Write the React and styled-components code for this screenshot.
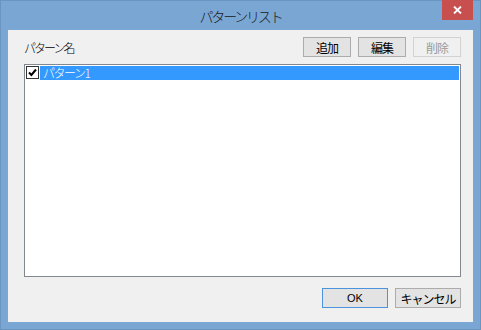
import React from 'react'
import styled, { createGlobalStyle } from 'styled-components'

const GlobalStyle = createGlobalStyle`
  html, body {
    margin: 0;
    padding: 0;
    background: #7aa6d3;
  }
  body {
    font-family: "Noto Sans CJK JP", "Noto Sans", sans-serif;
    font-size: 12px;
    font-weight: 300;
    color: #000;
  }
`

const Window = styled.div`
  width: 481px;
  height: 330px;
  box-sizing: border-box;
  background: #7aa6d3;
  border: 1px solid #6b95c1;
  display: flex;
  flex-direction: column;
  padding: 0 7px 7px 7px;
`

const TitleBar = styled.div`
  height: 29px;
  display: grid;
  grid-template-columns: 1fr auto 1fr;
  align-items: center;
`

const Title = styled.div`
  grid-column: 2;
  font-size: 14px;
  letter-spacing: -2.2px;
  color: #1a1a1a;
  padding-top: 1px;
`

const CloseButton = styled.div`
  grid-column: 3;
  justify-self: end;
  align-self: start;
  width: 31px;
  height: 20px;
  margin-top: -1px;
  background: #c74f4e;
  display: flex;
  align-items: center;
  justify-content: center;
`

const Client = styled.div`
  flex: 1;
  background: #f0f0f0;
  display: flex;
  flex-direction: column;
  padding: 7px 12px 14px 16px;
`

const HeaderRow = styled.div`
  display: flex;
  align-items: center;
  height: 20px;
  margin-bottom: 7px;
`

const Label = styled.div`
  flex: 1;
  letter-spacing: -2px;
  font-size: 12px;
  padding-top: 1px;
`

const ButtonGroup = styled.div`
  display: flex;
  gap: 7px;
`

const Button = styled.div`
  box-sizing: border-box;
  width: ${p => p.$wide ? 66 : 48}px;
  height: 20px;
  display: flex;
  align-items: center;
  justify-content: center;
  font-size: ${p => p.$latin ? 11 : 12}px;
  letter-spacing: ${p => p.$latin ? 0 : -1}px;
  font-family: ${p => p.$latin ? '"Liberation Sans", sans-serif' : 'inherit'};
  font-weight: 400;
  background: ${p => p.$disabled ? '#f0f0f0' : '#e3e3e3'};
  border: 1px solid ${p => p.$default ? '#4b93dc' : p.$disabled ? '#d2d2d2' : '#acacac'};
  color: ${p => p.$disabled ? '#9a9a9a' : '#000'};
`

const ListBox = styled.div`
  height: 213px;
  box-sizing: border-box;
  border: 1px solid #828790;
  background: #fff;
  padding: 1px;
`

const Row = styled.div`
  display: flex;
  align-items: stretch;
  height: 14px;
  gap: 1px;
`

const CheckBox = styled.div`
  width: 13px;
  height: 13px;
  box-sizing: border-box;
  border: 1px solid #333;
  background: #fff;
  display: flex;
  align-items: center;
  justify-content: center;
`

const RowText = styled.div`
  flex: 1;
  background: ${p => p.$selected ? '#3399ff' : 'transparent'};
  color: ${p => p.$selected ? '#fff' : '#000'};
  padding-left: 3px;
  line-height: 14px;
  font-size: 12px;
  letter-spacing: -1.5px;
`

const Footer = styled.div`
  display: flex;
  justify-content: flex-end;
  gap: 7px;
  margin-top: 11px;
`

const items = [{ name: 'パターン1', checked: true, selected: true }]

export default function App() {
  return (
    <>
      <GlobalStyle />
      <Window>
        <TitleBar>
          <Title>パターンリスト</Title>
          <CloseButton>
            <svg width="9" height="8" viewBox="0 0 9 8">
              <path d="M1 0.5 L8 7.5 M8 0.5 L1 7.5" stroke="#fff" strokeWidth="1.8" />
            </svg>
          </CloseButton>
        </TitleBar>
        <Client>
          <HeaderRow>
            <Label>パターン名</Label>
            <ButtonGroup>
              <Button>追加</Button>
              <Button>編集</Button>
              <Button $disabled>削除</Button>
            </ButtonGroup>
          </HeaderRow>
          <ListBox>
            {items.map(item => (
              <Row key={item.name}>
                <CheckBox>
                  {item.checked && (
                    <svg width="9" height="9" viewBox="0 0 9 9">
                      <path d="M1 4.5 L3.4 7 L8 1.5" fill="none" stroke="#000" strokeWidth="2" />
                    </svg>
                  )}
                </CheckBox>
                <RowText $selected={item.selected}>{item.name}</RowText>
              </Row>
            ))}
          </ListBox>
          <Footer>
            <Button $wide $default $latin>OK</Button>
            <Button $wide>キャンセル</Button>
          </Footer>
        </Client>
      </Window>
    </>
  )
}
